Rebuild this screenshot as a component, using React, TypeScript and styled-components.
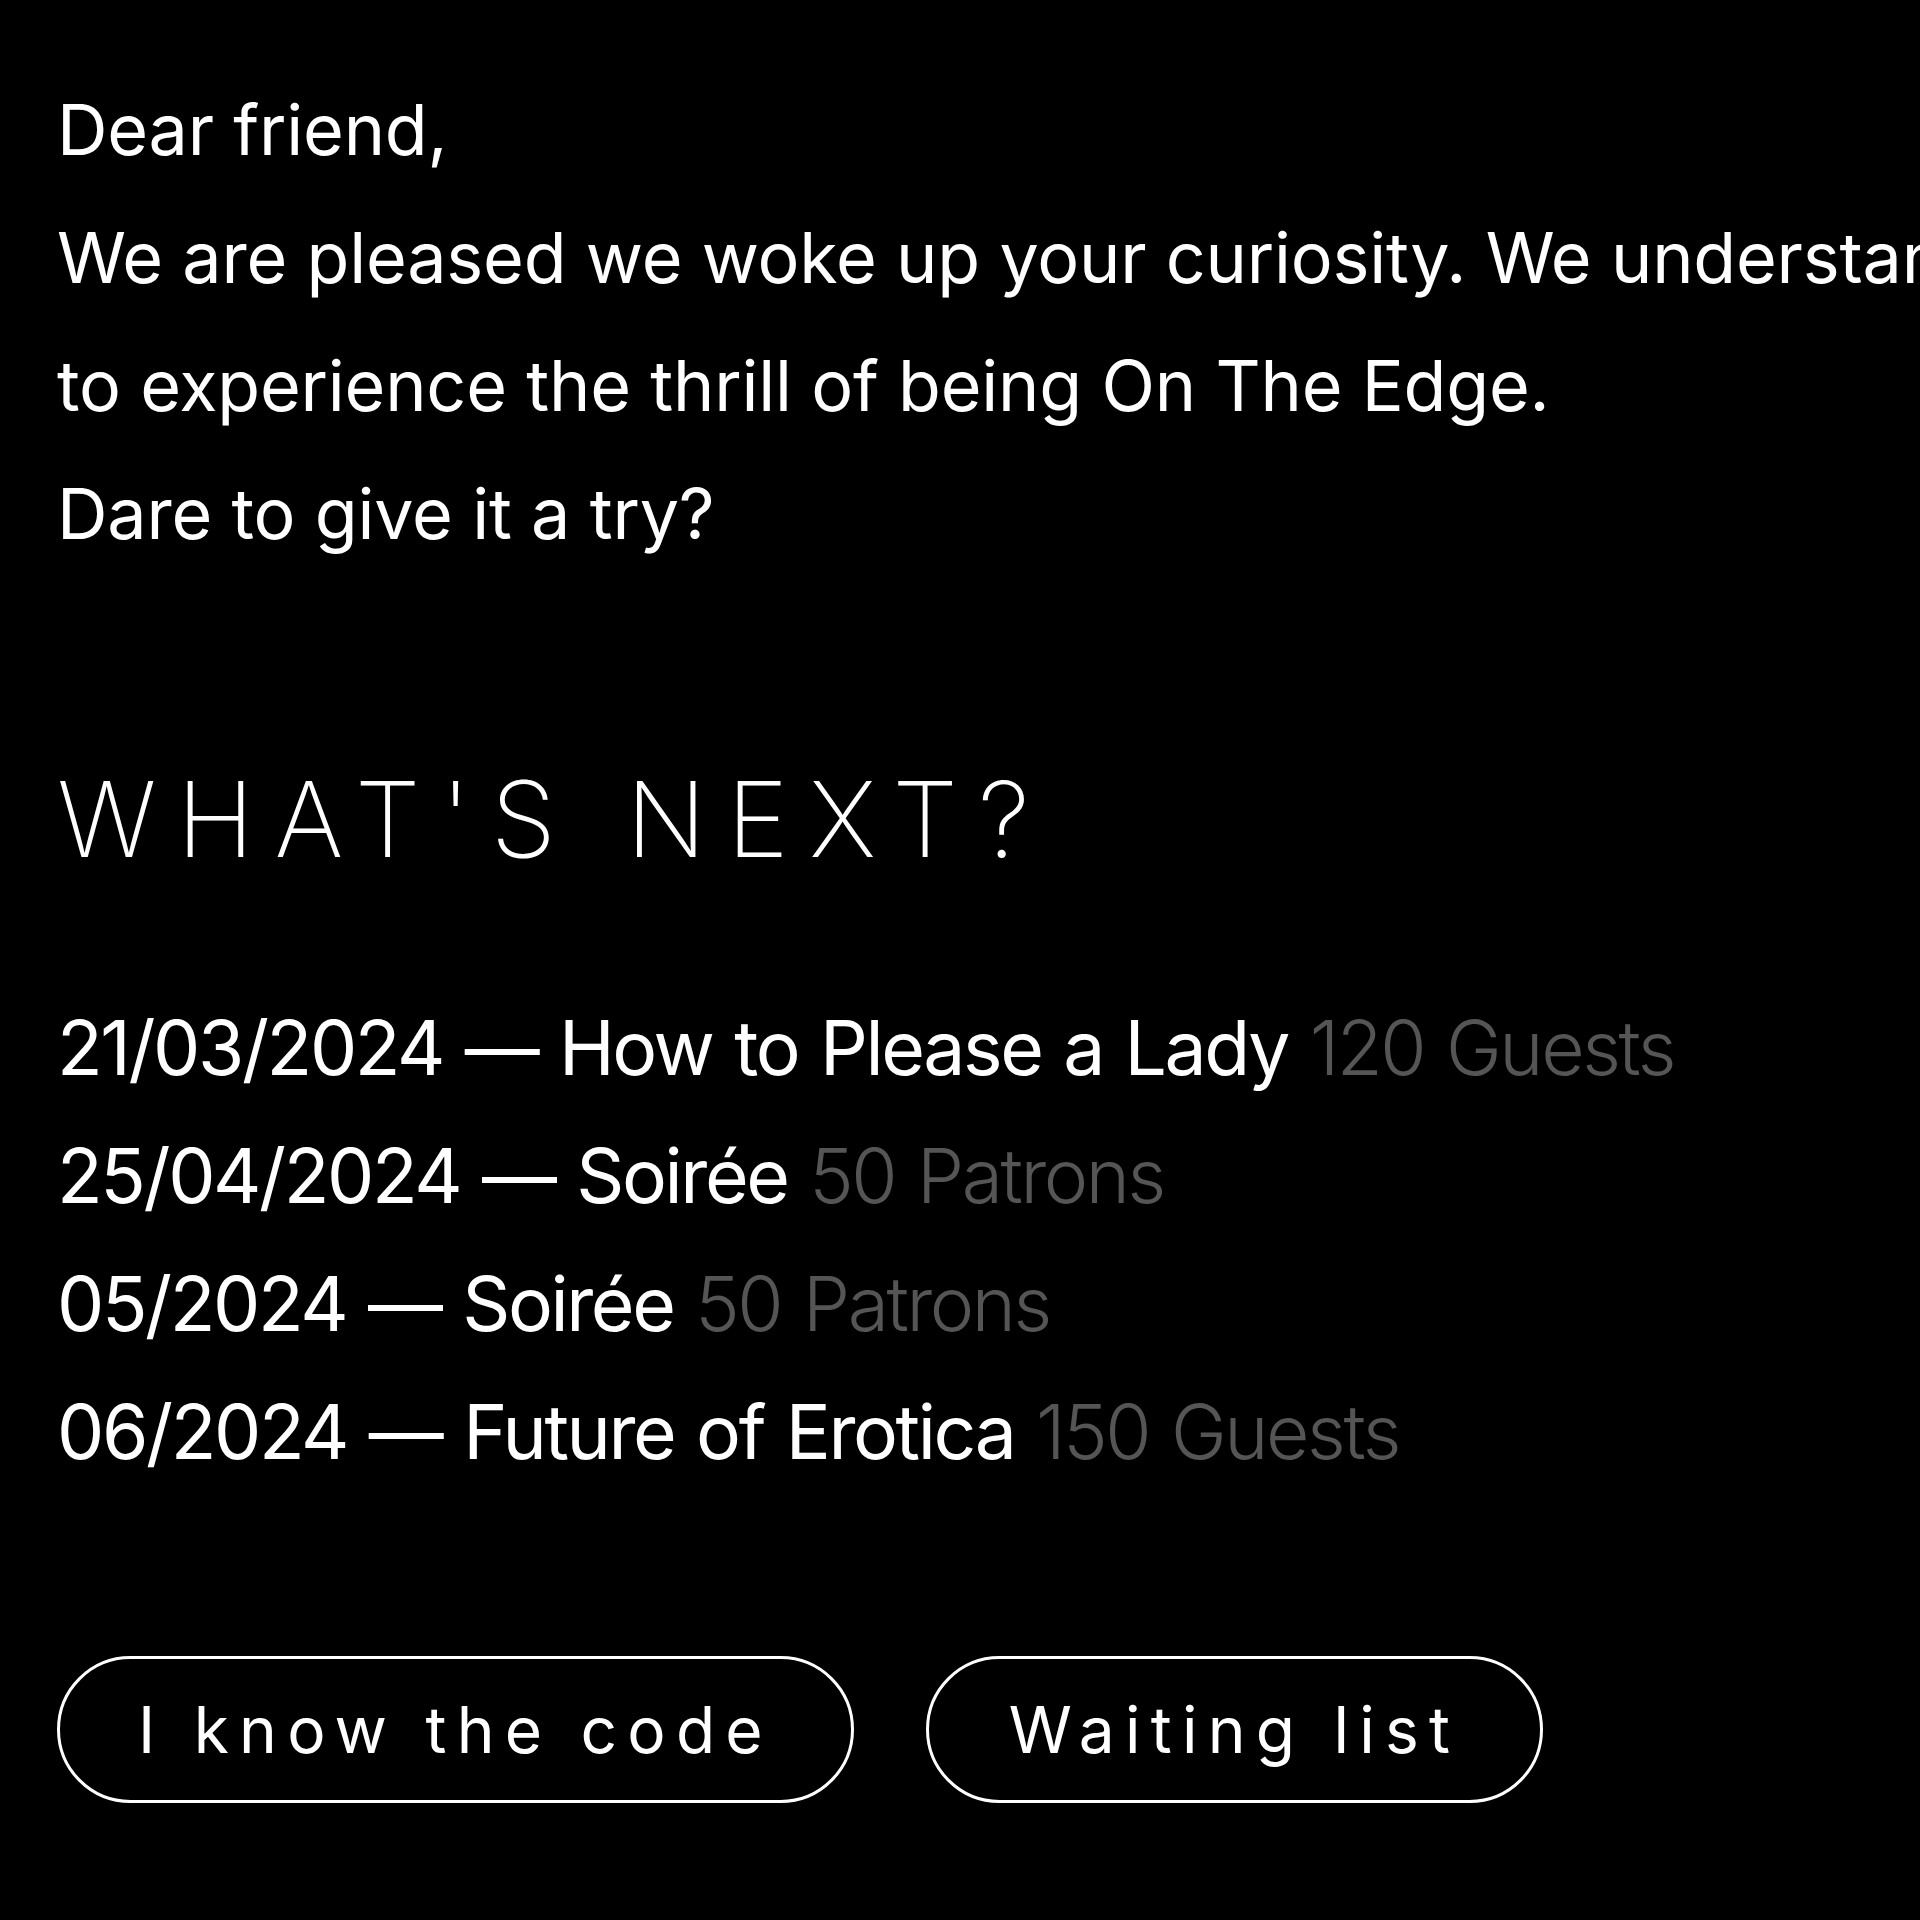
import React from "react";
import styled, { createGlobalStyle } from "styled-components";

const GlobalStyle = createGlobalStyle`
  html, body {
    margin: 0;
    padding: 0;
    background: #000;
  }
  body {
    font-family: "Inter", "Liberation Sans", sans-serif;
    color: #fff;
  }
`;

const Page = styled.div`
  width: 1920px;
  height: 1920px;
  overflow: hidden;
  background: #000;
  padding: 66px 0 0 57px;
  box-sizing: border-box;
`;

const Letter = styled.div`
  font-size: 70px;
  font-weight: 400;
  line-height: 128px;
  white-space: nowrap;
  letter-spacing: -0.2px;
`;

const Line = styled.p`
  margin: 0;
`;

const Heading = styled.h2`
  margin: 186px 0 0 0;
  font-size: 105px;
  font-weight: 200;
  line-height: 110px;
  letter-spacing: 0.193em;
`;

const Events = styled.ul`
  list-style: none;
  margin: 110px 0 0 0;
  padding: 0;
  font-size: 75px;
  line-height: 128px;
  letter-spacing: -2.4px;
  word-spacing: 3px;
  white-space: nowrap;
`;

const Event = styled.li`
  margin: 0;
`;

const Count = styled.span`
  color: #555;
  font-weight: 300;
`;

const Actions = styled.div`
  display: flex;
  gap: 72px;
  margin-top: 160px;
`;

const PillButton = styled.button<{ $width: number }>`
  width: ${(p) => p.$width}px;
  height: 147px;
  border: 3px solid #fff;
  border-radius: 999px;
  background: transparent;
  color: #fff;
  font-family: "Inter", "Liberation Sans", sans-serif;
  font-size: 64px;
  font-weight: 400;
  letter-spacing: 0.16em;
  padding: 0;
  box-sizing: border-box;
  cursor: pointer;
`;

const events = [
  { date: "21/03/2024", title: "How to Please a Lady", count: "120 Guests" },
  { date: "25/04/2024", title: "Soirée", count: "50 Patrons" },
  { date: "05/2024", title: "Soirée", count: "50 Patrons" },
  { date: "06/2024", title: "Future of Erotica", count: "150 Guests" },
];

export default function App() {
  return (
    <>
      <GlobalStyle />
      <Page>
        <Letter>
          <Line>Dear friend,</Line>
          <Line>
            We are pleased we woke up your curiosity. We understand your desire
          </Line>
          <Line>to experience the thrill of being On The Edge.</Line>
          <Line>Dare to give it a try?</Line>
        </Letter>
        <Heading>WHAT'S NEXT?</Heading>
        <Events>
          {events.map((e, i) => (
            <Event key={i}>
              {e.date} — {e.title} <Count>{e.count}</Count>
            </Event>
          ))}
        </Events>
        <Actions>
          <PillButton $width={797}>I know the code</PillButton>
          <PillButton $width={617}>Waiting list</PillButton>
        </Actions>
      </Page>
    </>
  );
}
